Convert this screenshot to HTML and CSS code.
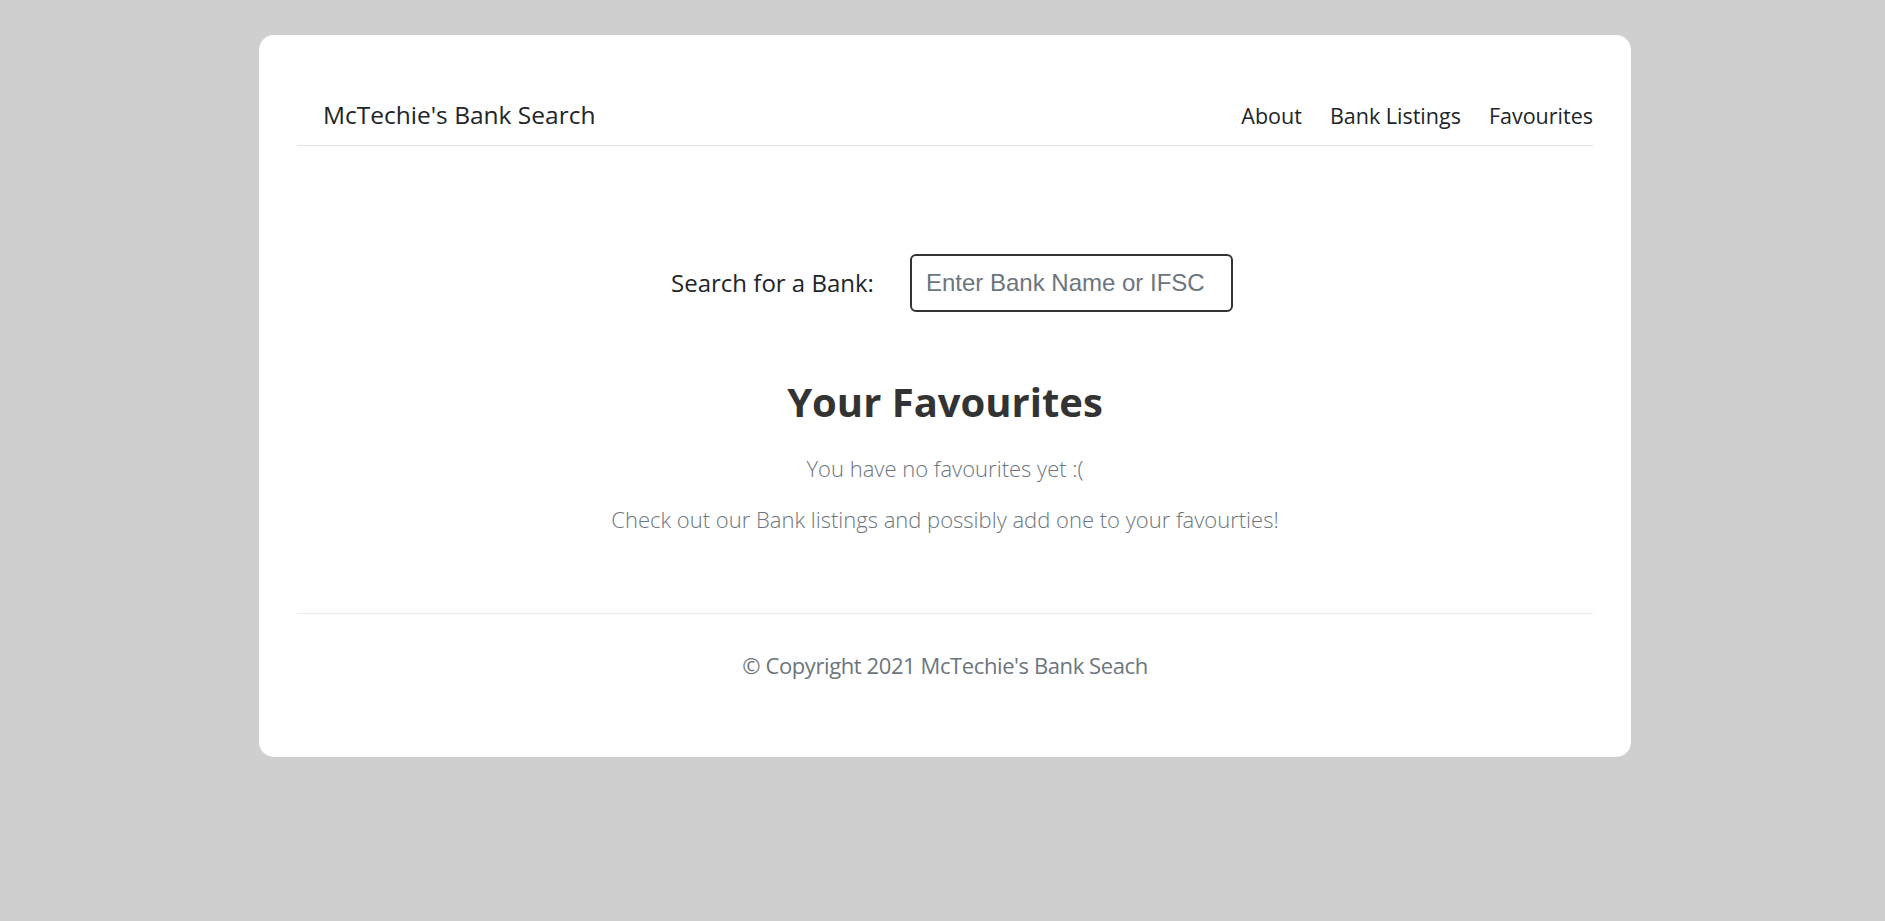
FILE: index.html
```html
<!DOCTYPE html>
<html lang="en">
<head>
<meta charset="utf-8">
<title>McTechie's Bank Search</title>
<link rel="stylesheet" href="styles.css">
</head>
<body>
<div class="card">
  <header class="navbar">
    <a class="brand" href="#">McTechie's Bank Search</a>
    <nav class="nav">
      <a href="#">About</a>
      <a href="#">Bank Listings</a>
      <a href="#">Favourites</a>
    </nav>
  </header>
  <main class="main">
    <div class="search">
      <label class="search-label" for="q">Search for a Bank:</label>
      <input class="search-input" id="q" type="text" placeholder="Enter Bank Name or IFSC">
    </div>
    <h1 class="title">Your Favourites</h1>
    <p class="lead lead-first">You have no favourites yet :(</p>
    <p class="lead">Check out our Bank listings and possibly add one to your favourties!</p>
  </main>
  <footer class="footer">
    <p class="copyright">© Copyright 2021 McTechie's Bank Seach</p>
  </footer>
</div>
</body>
</html>
```
FILE: styles.css
```css
html, body { margin: 0; padding: 0; }
body {
  background: #cfcfcf;
  font-family: "Open Sans", "Lato", sans-serif;
  color: #212529;
  padding: 35px 0 0 5px;
}
.card {
  width: 1372px;
  margin: 0 auto;
  background: #fff;
  border-radius: 15px;
  padding: 0 38px;
  box-sizing: border-box;
}
.navbar {
  display: flex;
  justify-content: space-between;
  align-items: baseline;
  border-bottom: 1px solid #dee2e6;
  padding: 65px 0 14px 26px;
}
.brand {
  color: #212529;
  text-decoration: none;
  font-size: 24.5px;
  line-height: 30px;
}
.nav { display: flex; gap: 28px; }
.nav a {
  color: #212529;
  text-decoration: none;
  font-size: 21.5px;
  line-height: 30px;
}
.main { text-align: center; padding-top: 108px; }
.search {
  display: flex;
  justify-content: center;
  align-items: center;
  gap: 36px;
  padding-left: 14px;
}
.search-label { font-size: 24px; line-height: 30px; }
.search-input {
  width: 323px;
  height: 58px;
  box-sizing: border-box;
  border: 2px solid #333;
  border-radius: 6px;
  padding: 0 14px;
  font-family: "Liberation Sans", Arial, sans-serif;
  font-size: 24px;
  color: #212529;
}
.search-input::placeholder { color: #6c757d; }
.title {
  font-size: 40px;
  line-height: 48px;
  font-weight: 700;
  color: #333;
  margin: 66px 0 26px;
}
.lead {
  font-size: 22px;
  line-height: 33px;
  font-weight: 300;
  color: #6c757d;
  margin: 18px 0 0;
}
.lead-first { margin-top: 0; }
.footer {
  border-top: 1px solid #e9ecef;
  margin-top: 77px;
  padding: 35px 0 75px;
  text-align: center;
}
.copyright {
  margin: 0;
  color: #6c757d;
  font-size: 22px;
  line-height: 33px;
  letter-spacing: -0.4px;
}
```
